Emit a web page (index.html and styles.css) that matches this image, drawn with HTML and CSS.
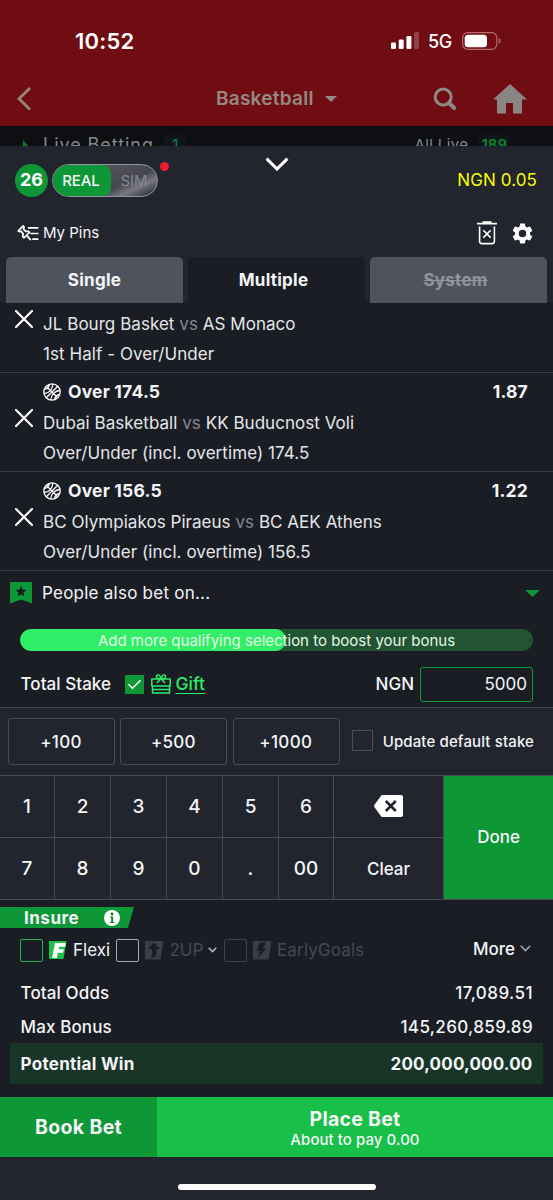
FILE: index.html
```html
<!DOCTYPE html>
<html lang="en">
<head>
<meta charset="utf-8">
<title>Betslip</title>
<link rel="stylesheet" href="styles.css">
</head>
<body>
<header class="top">
  <div class="status">
    <span class="clock">10:52</span>
    <div class="signals">
      <svg class="bars" width="28" height="18" viewBox="0 0 28 18"><g fill="#fff"><rect x="0" y="10.500" width="5" height="6.500" rx="1.300"/><rect x="7.700" y="7.500" width="5" height="9.500" rx="1.300"/><rect x="15.400" y="4" width="5" height="13" rx="1.300"/><rect x="23" y="0" width="5" height="17" rx="1.300" opacity=".22"/></g></svg>
      <span class="net">5G</span>
      <svg class="battery" width="40" height="18" viewBox="0 0 40 18"><rect x=".6" y=".6" width="34.300" height="16.800" rx="5.400" fill="none" stroke="#b86a72" stroke-width="1.200"/><rect x="2.700" y="2.700" width="22.300" height="12.600" rx="3.500" fill="#fff"/><path d="M36.700 6c2.600.8 2.600 5.200 0 6z" fill="#b0606a"/></svg>
    </div>
  </div>
  <nav class="nav">
    <svg class="back" width="16" height="24" viewBox="0 0 16 24"><path d="M13 2 3 11.800 13 21.500" fill="none" stroke="#94877f" stroke-width="2.800" stroke-linecap="square"/></svg>
    <div class="sport"><span class="sport-name">Basketball</span><svg width="12" height="6" viewBox="0 0 12 6"><path d="M0 0h12L6 6z" fill="#948983"/></svg></div>
    <svg class="search" width="24" height="24" viewBox="0 0 24 24"><circle cx="10.200" cy="10" r="8" fill="none" stroke="#8f8986" stroke-width="3"/><path d="m16 16 5.200 5" stroke="#8f8986" stroke-width="4" stroke-linecap="round"/></svg>
    <svg class="home" width="34" height="30" viewBox="0 0 34 30"><path d="M17 0 0 15.500h4V29.500h9V19h7v10.500h9V15.500h5z" fill="#898582"/></svg>
  </nav>
</header>
<div class="peek">
  <svg class="peek-arrow" width="7" height="12" viewBox="0 0 7 12"><path d="M0 0 7 8v4H0z" fill="#0b7a2a"/></svg>
  <span class="peek-title">Live Betting</span><span class="peek-count">1</span>
  <span class="peek-all">All Live</span><span class="peek-total">189</span>
</div>
<main class="slip">
  <section class="slip-head">
    <svg class="collapse" width="24" height="14" viewBox="0 0 24 14"><path d="M1.600 1.600 12 12 22.400 1.600" fill="none" stroke="#fff" stroke-width="3"/></svg>
    <div class="account">
      <span class="count">26</span>
      <div class="mode"><span class="real">REAL</span><span class="sim">SIM</span><i class="dot"></i></div>
      <span class="balance">NGN 0.05</span>
    </div>
    <div class="tools">
      <svg width="22" height="17" viewBox="0 0 23 18"><g fill="none" stroke="#fff" stroke-width="1.800" stroke-linejoin="round"><path d="M6.500 1 1.200 6.300l1.400.8 1.700-.5 2.100 3-.5 2.500 1.300 1.600 6-6-1.600-1.200-2.400.4L6.700 4.300l.7-2z"/><path d="m10 11 4.500 5M11.500 3h11M14 9h8.500M16 15h6.500"/></g></svg>
      <span class="pins">My Pins</span>
      <svg class="trash" width="20" height="24" viewBox="0 0 20 24"><path d="M0 2.600h20M5.500 1h9" stroke="#fff" stroke-width="1.700"/><path d="M2.600 5.500v14.800q0 2.300 2.300 2.300h10.200q2.300 0 2.300-2.300V5.500" fill="none" stroke="#fff" stroke-width="1.600"/><path d="m6.300 9.200 7.400 7.400m0-7.400-7.400 7.400" stroke="#fff" stroke-width="1.600"/></svg>
      <svg class="gear" width="25" height="25" viewBox="0 0 24 24"><path fill="#fff" d="M19.140 12.940c.04-.3.060-.610.060-.940 0-.320-.020-.640-.070-.940l2.030-1.580c.180-.140.230-.410.120-.610l-1.920-3.320c-.120-.220-.370-.290-.590-.220l-2.390.960c-.500-.380-1.030-.700-1.620-.940l-.360-2.540c-.040-.240-.240-.410-.480-.410h-3.840c-.240 0-.430.170-.470.410l-.360 2.540c-.590.240-1.130.570-1.620.940l-2.390-.960c-.220-.080-.470 0-.590.220L2.740 8.870c-.120.210-.080.470.120.610l2.030 1.580c-.050.300-.090.630-.090.940s.020.640.070.940l-2.030 1.580c-.180.140-.230.410-.120.610l1.920 3.320c.120.220.370.290.590.220l2.390-.960c.500.380 1.030.700 1.620.940l.360 2.540c.050.240.240.410.480.410h3.840c.240 0 .440-.170.470-.410l.360-2.540c.590-.240 1.130-.560 1.620-.940l2.390.960c.220.080.470 0 .590-.220l1.920-3.320c.120-.220.070-.470-.120-.610l-2.010-1.580zM12 15.600a3.600 3.600 0 1 1 0-7.200 3.600 3.600 0 0 1 0 7.200z"/></svg>
    </div>
    <div class="tabs"><div class="tab">Single</div><div class="tab active">Multiple</div><div class="tab off">System</div></div>
  </section>

  <section class="bets">
    <article class="bet cut">
      <svg class="remove" width="18" height="18" viewBox="0 0 18 18"><path d="m1 1 16 16M17 1 1 17" stroke="#fff" stroke-width="2.200" stroke-linecap="round"/></svg>
      <div class="bet-info"><p class="teams">JL Bourg Basket <em>vs</em> AS Monaco</p><p class="market">1st Half - Over/Under</p></div>
    </article>
    <article class="bet">
      <svg class="remove" width="18" height="18" viewBox="0 0 18 18"><path d="m1 1 16 16M17 1 1 17" stroke="#fff" stroke-width="2.200" stroke-linecap="round"/></svg>
      <div class="bet-info">
        <div class="pick"><svg width="18" height="18" viewBox="0 0 18 18"><g fill="none" stroke="#fff" stroke-width="1.300"><circle cx="9" cy="9" r="8.200"/><path d="M3 15 15 3M3.500 3.500 14.500 14.500M1.200 10.500C6 10.500 9.500 6.500 9.800 1M7.800 17C8 12 12 7.600 16.900 7.500M1.600 6.200Q5 6.500 6.400 1.500M11.500 16.500q1-4.500 5-5"/></g></svg><b>Over 174.5</b><strong>1.87</strong></div>
        <p class="teams">Dubai Basketball <em>vs</em> KK Buducnost Voli</p><p class="market">Over/Under (incl. overtime) 174.5</p>
      </div>
    </article>
    <article class="bet">
      <svg class="remove" width="18" height="18" viewBox="0 0 18 18"><path d="m1 1 16 16M17 1 1 17" stroke="#fff" stroke-width="2.200" stroke-linecap="round"/></svg>
      <div class="bet-info">
        <div class="pick"><svg width="18" height="18" viewBox="0 0 18 18"><g fill="none" stroke="#fff" stroke-width="1.300"><circle cx="9" cy="9" r="8.200"/><path d="M3 15 15 3M3.500 3.500 14.500 14.500M1.200 10.500C6 10.500 9.500 6.500 9.800 1M7.800 17C8 12 12 7.600 16.900 7.500M1.600 6.200Q5 6.500 6.400 1.500M11.500 16.500q1-4.500 5-5"/></g></svg><b>Over 156.5</b><strong>1.22</strong></div>
        <p class="teams">BC Olympiakos Piraeus <em>vs</em> BC AEK Athens</p><p class="market">Over/Under (incl. overtime) 156.5</p>
      </div>
    </article>
  </section>

  <section class="also">
    <svg width="22" height="22" viewBox="0 0 22 22"><path d="M0 0h22v21.500L11 17.500 0 21.500z" fill="#0d9737"/><path d="m11 4 1.600 3.400 3.700.5-2.700 2.600.7 3.700-3.300-1.800-3.300 1.800.7-3.700-2.700-2.600 3.700-.5z" fill="#1b1d25"/></svg>
    <span>People also bet on...</span>
    <svg class="caret" width="15" height="7" viewBox="0 0 15 7"><path d="M0 0h15L7.500 7z" fill="#0d9737"/></svg>
  </section>
  <div class="boost"><div class="boost-fill"></div><span>Add more qualifying selection to boost your bonus</span></div>
  <section class="stake">
    <span class="stake-label">Total Stake</span>
    <span class="check"><svg width="19" height="19" viewBox="0 0 19 19"><path d="m3.500 9.300 4 4 8-8" fill="none" stroke="#fff" stroke-width="1.500"/></svg></span>
    <svg class="gift-icon" width="20" height="20" viewBox="0 0 20 20"><g fill="none" stroke="#2eea68" stroke-width="1.500" stroke-linejoin="round"><path d="M.8 5h18.400v7H.8zM1.500 12v7h17v-7M1.500 15.500h17"/><path d="M10 5C7 5 5 3.700 5.500 2 6.500-.2 9.500.8 10 5c.5-4.200 3.500-5.200 4.500-3C15 3.700 13 5 10 5zM9.500 5 6 9M10.500 5 14 9"/></g></svg>
    <span class="gift">Gift</span>
    <span class="currency">NGN</span>
    <div class="amount">5000</div>
  </section>
  <section class="quick">
    <div class="add">+100</div><div class="add">+500</div><div class="add">+1000</div>
    <i class="box default-box"></i><span class="default-label">Update default stake</span>
  </section>
  <section class="keys">
    <div>1</div><div>2</div><div>3</div><div>4</div><div>5</div><div>6</div>
    <div class="erase"><svg width="29" height="22" viewBox="0 0 29 22"><path d="M8.500 0H27q2 0 2 2v18q0 2-2 2H8.500q-1 0-1.800-1.200L.5 12.200q-.8-1.200 0-2.400L6.700 1.200Q7.500 0 8.500 0z" fill="#fff"/><path d="m11.800 6 10 10m0-10-10 10" stroke="#22242e" stroke-width="2.500"/></svg></div>
    <div class="done">Done</div>
    <div>7</div><div>8</div><div>9</div><div>0</div><div>.</div><div>00</div><div class="clear">Clear</div>
  </section>

  <section class="summary">
    <div class="insure"><b>Insure</b><svg width="16" height="16" viewBox="0 0 16 16"><circle cx="8" cy="8" r="8" fill="#fff"/><path d="M6 6.500h3V12h1.300v1H6v-1h1.200V7.500H6z" fill="#0d7a2e"/><circle cx="8" cy="4" r="1.400" fill="#0d7a2e"/></svg></div>
    <div class="options">
      <i class="box green"></i>
      <svg class="opt-icon" width="18" height="18" viewBox="0 0 18 18"><path d="M0 0h17.500l-3 18H0z" fill="#19c449"/><path d="M6 2h11l-.8 3.800H10l-.5 2.400h5.300l-.8 3.600H8.800L7.800 17H3z" fill="#fff"/></svg>
      <span class="flexi">Flexi</span>
      <i class="box light"></i>
      <svg class="opt-icon" width="19" height="19" viewBox="0 0 19 19"><path d="M0 0h18.500l-3 18.500H0z" fill="#3b3d48"/><path d="m9 1.500 6 6.500h-3.500v5q0 3-6 4 1.500-1.800 1.500-4V8H3z" fill="#1b1d25"/></svg>
      <span class="two-up">2UP</span>
      <svg class="mini" width="9" height="6" viewBox="0 0 9 6"><path d="m.7.800 3.800 3.800L8.300.8" fill="none" stroke="#b4b7bd" stroke-width="1.500"/></svg>
      <i class="box dim"></i>
      <svg class="opt-icon" width="19" height="19" viewBox="0 0 19 19"><path d="M0 0h18.500l-3 18.500H0z" fill="#3b3d48"/><path d="M6.500 1.500 3.500 10h3.300L5 17l8.500-9.500H9.800L13 1.500z" fill="#1b1d25"/></svg>
      <span class="early">EarlyGoals</span>
      <span class="more">More</span>
      <svg class="more-arrow" width="11" height="7" viewBox="0 0 11 7"><path d="m.7.800 4.800 4.800L10.300.8" fill="none" stroke="#a0a3ad" stroke-width="1.500"/></svg>
    </div>
    <div class="line"><span>Total Odds</span><span class="odds">17,089.51</span></div>
    <div class="line"><span>Max Bonus</span><span class="bonus">145,260,859.89</span></div>
    <div class="line win"><span>Potential Win</span><span class="payout">200,000,000.00</span></div>
  </section>
  <div class="actions"><div class="book">Book Bet</div><div class="place"><b>Place Bet</b><span>About to pay 0.00</span></div></div>
  <footer class="foot"><i class="home-bar"></i></footer>
</main>
</body>
</html>
```

FILE: styles.css
```css
* { box-sizing: border-box; }
body { margin: 0; width: 553px; height: 1200px; overflow: hidden; background: #1b1d25; color: #f4f5f7; font-family: Inter, Roboto, "Liberation Sans", sans-serif; font-size: 16px; line-height: 20px; white-space: nowrap; }
p { margin: 0; }
svg, i { display: block; flex: none; }
.top { height: 126px; background: #700d13; }
.status { height: 72px; padding: 10px 51px 0 75px; display: flex; align-items: center; justify-content: space-between; color: #fff; }
.clock { font-size: 22px; font-weight: 600; letter-spacing: .2px; }
.signals { display: flex; align-items: center; height: 20px; }
.net { font-size: 18px; font-weight: 500; margin-left: 9px; width: 25px; letter-spacing: -.3px; padding-top: 2px; }
.battery { margin-left: 9px; }
.nav { height: 54px; padding: 0 26px 0 16px; display: flex; align-items: center; }
.sport { margin-left: 184px; display: flex; align-items: center; gap: 11px; width: 218px; color: #948983; font-size: 19px; font-weight: 600; }
.sport-name { letter-spacing: .25px; }
.home { margin-left: 36px; }
.peek { height: 20px; background: #0e0f13; display: flex; align-items: flex-start; padding: 9px 44px 0 23px; overflow: hidden; color: #85878b; font-size: 18px; }
.peek-arrow { margin-top: 5px; }
.peek-title { margin-left: 13px; letter-spacing: .95px; }
.peek-count, .peek-total { color: #0c8531; background: #10161a; height: 22px; }
.peek-count { margin-left: 10px; padding: 0 8px; font-size: 16px; }
.peek-all { margin-left: auto; font-size: 15px; letter-spacing: .4px; }
.peek-total { margin-left: 11px; padding: 0 2px; font-size: 15px; font-weight: 600; }
.slip { height: 1054px; background: #1b1d25; }
.slip-head { height: 156px; background: #22242e; padding: 11px 6px 0; }
.collapse { margin: 0 auto; }
.account { height: 34px; display: flex; align-items: center; margin-top: -8px; padding: 0 10px 0 9px; }
.count { width: 33px; height: 33px; border-radius: 50%; background: #0d9737; color: #fff; font-size: 18px; font-weight: 700; line-height: 32px; text-align: center; }
.mode { position: relative; margin-left: 4px; width: 106px; height: 33px; border: 1px solid #9295a4; border-radius: 17px; display: flex; line-height: 31px; background: linear-gradient(155deg, #50515b 40%, #44454e 65%, #777881 78%, #3c3e48 92%); }
.real { width: 58px; padding-right: 2px; background: #0d9737; border-radius: 16px 9px 9px 16px; text-align: center; font-size: 15px; font-weight: 500; letter-spacing: -.1px; }
.sim { width: 46px; text-align: center; color: #868995; font-size: 15px; }
.dot { position: absolute; left: 107px; top: -3px; width: 9px; height: 9px; border-radius: 50%; background: #ec1b2e; }
.balance { margin-left: auto; color: #f7ff00; font-size: 17px; letter-spacing: .1px; }
.tools { height: 42px; margin-top: 12px; display: flex; align-items: center; padding: 6px 12.500px 0 11px; }
.pins { margin-left: 4px; font-size: 15px; }
.trash { margin-left: auto; }
.gear { margin-left: 12.500px; }
.tabs { margin-top: 6px; display: grid; grid-template-columns: repeat(3, 177px); gap: 5px; height: 45px; }
.tab { background: #50535e; border-radius: 5px 5px 0 0; text-align: center; line-height: 46px; font-size: 17px; font-weight: 700; letter-spacing: .25px; }
.active { background: #1b1d25; padding-right: 6px; }
.off { color: #92959f; text-decoration: line-through; padding-right: 6px; }
.bets { height: 269px; }
.bet { height: 99px; border-bottom: 1px solid #3a3c47; display: flex; padding: 10px 25px 0 15px; }
.bet .remove { margin-top: 26px; }
.bet-info { margin-left: 10px; flex: 1; }
.cut { height: 71px; padding-top: 8px; }
.bet.cut .remove { margin-top: 0; }
.cut .bet-info { padding-top: 4px; }
.pick { display: flex; align-items: center; height: 18px; margin-bottom: 12px; font-size: 17.500px; letter-spacing: .2px; }
.pick b { margin-left: 7px; }
.pick strong { margin-left: auto; }
.teams, .market { font-size: 17px; letter-spacing: .04px; color: #e4e6e9; }
.teams em { font-style: normal; color: #858892; }
.market { margin-top: 10px; letter-spacing: .07px; }
.also { height: 58px; padding: 0 13px 14px 10px; display: flex; align-items: center; font-size: 17px; letter-spacing: .24px; }
.also span { margin-left: 10px; }
.caret { margin-left: auto; }
.boost { position: relative; height: 22px; margin: 0 20px; border-radius: 11px; overflow: hidden; background: #225333; text-align: center; font-size: 15px; line-height: 23px; color: #e2f8e5; }
.boost-fill { position: absolute; inset: 0 auto 0 0; width: 266px; border-radius: 11px; background: #32ed67; }
.boost span { position: relative; }
.stake { height: 56px; padding: 10px 20px 0 20.500px; display: flex; align-items: center; font-size: 17px; font-weight: 500; }
.stake-label { width: 91px; letter-spacing: .05px; }
.check { margin-left: 13px; width: 19px; height: 19px; background: #0d9737; }
.gift-icon { margin-left: 7px; }
.gift { margin-left: 5px; color: #2eea68; font-size: 17.500px; text-decoration: underline; text-underline-offset: 3px; }
.currency { margin-left: auto; }
.amount { margin-left: 6px; width: 113px; height: 35px; border: 1px solid #129a39; border-radius: 3px; padding-right: 5px; text-align: right; line-height: 33px; font-size: 17px; font-weight: 400; }
.quick { height: 68px; background: #22242e; border-top: 1px solid #454752; padding: 10px 18px 0 8px; display: flex; align-items: flex-start; }
.add { width: 107px; height: 47px; margin-right: 5.400px; border: 1px solid #484b57; border-radius: 3px; padding-right: 1px; text-align: center; line-height: 46px; font-weight: 500; font-size: 17px; letter-spacing: .3px; }
.box { width: 22px; height: 22px; border: 1.500px solid #40424d; border-radius: 2px; }
.default-box { width: 21px; height: 21px; margin: 12px 10px 0 6.500px; border-color: #4a4d57; border-radius: 0; }
.default-label { margin: 14px 0 0; font-size: 15px; font-weight: 500; letter-spacing: .13px; }
.keys { height: 125px; border-top: 1px solid #484b57; border-bottom: 1px solid #484b57; background: #484b57; display: grid; grid-template-columns: 54px 55px 55px 55px 55px 54px 109px 109px; grid-template-rows: 61px 61px; gap: 1px; font-size: 19px; font-weight: 500; }
.keys div { background: #22242e; display: flex; align-items: center; justify-content: center; }
.keys .erase { padding-bottom: 1px; }
.keys .done { grid-column: 8; grid-row: 1 / span 2; background: #0d9737; font-size: 17px; padding-bottom: 1px; }
.keys .clear { font-size: 17px; }
.summary { height: 197px; padding-top: 7px; }
.insure { width: 134px; height: 21px; background: #0d9737; clip-path: polygon(0 0, 100% 0, 95.500% 100%, 0 100%); display: flex; align-items: center; padding: 0 14px 0 24px; justify-content: space-between; font-size: 17px; letter-spacing: .5px; }
.options { height: 44px; display: flex; align-items: center; padding: 0 22px 0 20px; font-size: 17px; }
.box.green { width: 23px; height: 23px; border-color: #24b34d; }
.box.light { width: 23px; height: 23px; border-color: #a7a9b0; margin-left: 5px; }
.box.dim { width: 23px; height: 23px; margin-left: 7px; }
.opt-icon { margin-left: 6px; }
.flexi { margin-left: 6px; width: 38px; }
.two-up { margin-left: 5.500px; width: 34.500px; color: #464853; }
.mini { margin-left: 4px; }
.early { margin-left: 5px; color: #464853; letter-spacing: .15px; }
.more { margin: -3px 5px 0 auto; font-size: 17px; font-weight: 500; }
.more-arrow { margin-top: -4px; }
.line { height: 34px; padding: 7px 20px 0 20.500px; display: flex; justify-content: space-between; font-size: 17px; font-weight: 500; line-height: 28px; letter-spacing: .12px; }
.odds { letter-spacing: .45px; }
.bonus { letter-spacing: .36px; }
.win { height: 41px; margin: 3px 10px 0; padding: 7px 10.500px 0 10.500px; background: #193527; font-weight: 700; letter-spacing: .3px; }
.payout { letter-spacing: .18px; }
.actions { height: 60px; display: flex; }
.book { width: 157px; background: #0d9737; text-align: center; line-height: 60px; font-size: 19.500px; font-weight: 700; letter-spacing: .35px; }
.place { flex: 1; background: #18bf48; display: flex; flex-direction: column; align-items: center; padding-top: 12px; }
.place b { font-size: 19.500px; letter-spacing: .25px; }
.place span { font-size: 15px; margin-top: 2px; line-height: 18px; font-weight: 500; letter-spacing: .06px; }
.foot { height: 43px; background: #22242e; padding-top: 27px; }
.home-bar { width: 198px; height: 6px; border-radius: 3px; background: #fff; margin: 0 auto; }
```
